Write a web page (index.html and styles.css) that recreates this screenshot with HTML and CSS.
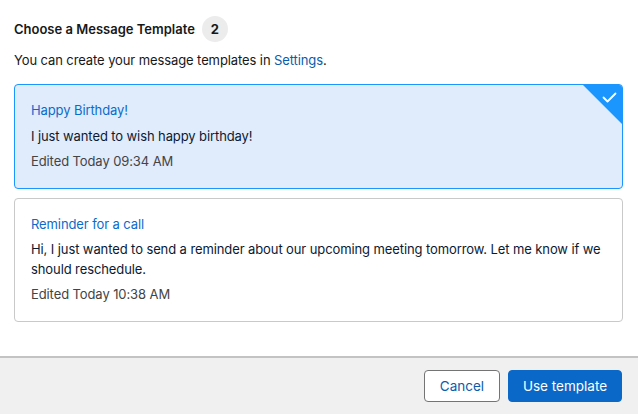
FILE: index.html
```html
<!DOCTYPE html>
<html>
<head>
<meta charset="utf-8">
<link rel="stylesheet" href="styles.css">
</head>
<body>
<div class="modal">
  <div class="content">
    <div class="heading">
      <span class="title">Choose a Message Template</span>
      <span class="badge">2</span>
    </div>
    <p class="hint">You can create your message templates in <a class="link" href="#">Settings</a>.</p>
    <div class="list">
      <div class="card selected">
        <div class="corner">
          <svg width="15" height="11" viewBox="0 0 15 11"><path d="M1.5 5.5 L5.5 9.5 L13.5 1.5" fill="none" stroke="#fff" stroke-width="1.8" stroke-linecap="round" stroke-linejoin="round"/></svg>
        </div>
        <div class="card-title">Happy Birthday!</div>
        <div class="card-body">I just wanted to wish happy birthday!</div>
        <div class="card-meta">Edited Today 09:34 AM</div>
      </div>
      <div class="card">
        <div class="card-title">Reminder for a call</div>
        <div class="card-body">Hi, I just wanted to send a reminder about our upcoming meeting tomorrow. Let me know if we should reschedule.</div>
        <div class="card-meta">Edited Today 10:38 AM</div>
      </div>
    </div>
  </div>
  <div class="footer">
    <button class="btn btn-neutral">Cancel</button>
    <button class="btn btn-brand">Use template</button>
  </div>
</div>
</body>
</html>
```
FILE: styles.css
```css
* { box-sizing: border-box; }
html, body { margin: 0; padding: 0; }
body {
  font-family: Inter, "Liberation Sans", sans-serif;
  font-size: 13px;
  letter-spacing: -0.1px;
  color: #181818;
  background: #fff;
  width: 638px;
  height: 414px;
  overflow: hidden;
}
.modal {
  display: flex;
  flex-direction: column;
  height: 414px;
}
.content {
  flex: 1;
  padding: 16px 15px 0 14px;
}
.heading {
  display: flex;
  align-items: center;
  height: 26px;
}
.title {
  font-size: 13px;
  font-weight: 600;
  letter-spacing: 0;
  color: #181818;
}
.badge {
  margin-left: 7px;
  width: 26px;
  height: 26px;
  border-radius: 50%;
  background: #ececec;
  display: flex;
  align-items: center;
  justify-content: center;
  font-weight: 700;
  color: #181818;
}
.hint {
  margin: 9px 0 14px;
  line-height: 19px;
  color: #181818;
}
.link { color: #0b5cab; text-decoration: none; }
.list {
  display: flex;
  flex-direction: column;
  gap: 9px;
}
.card {
  position: relative;
  border: 1px solid #c9c9c9;
  border-radius: 4px;
  padding: 16px;
  line-height: 19.5px;
  overflow: hidden;
}
.card.selected {
  background: #e0ebfb;
  border-color: #1b96ff;
}
.corner {
  position: absolute;
  top: 0;
  right: 0;
  width: 39px;
  height: 39px;
  background: #1b96ff;
  clip-path: polygon(0 0, 100% 0, 100% 100%);
}
.corner svg {
  position: absolute;
  top: 7px;
  right: 5px;
}
.card-title { color: #0b6bcb; }
.card-body { margin-top: 6px; color: #0b1a33; }
.card-meta { margin-top: 6px; color: #444; }
.footer {
  height: 58px;
  background: #f0f0f0;
  border-top: 2px solid #c3c3c3;
  display: flex;
  justify-content: flex-end;
  align-items: center;
  gap: 8px;
  padding: 0 16px 0 0;
}
.btn {
  font-family: inherit;
  font-size: 13.5px;
  letter-spacing: 0;
  height: 32px;
  border-radius: 4px;
  padding: 0;
  white-space: nowrap;
  cursor: pointer;
}
.btn-neutral {
  background: #fff;
  border: 1px solid #747474;
  color: #0b5cab;
  width: 76px;
}
.btn-brand {
  background: #0a68c9;
  border: 1px solid #0a68c9;
  color: #fff;
  width: 114px;
}
```
